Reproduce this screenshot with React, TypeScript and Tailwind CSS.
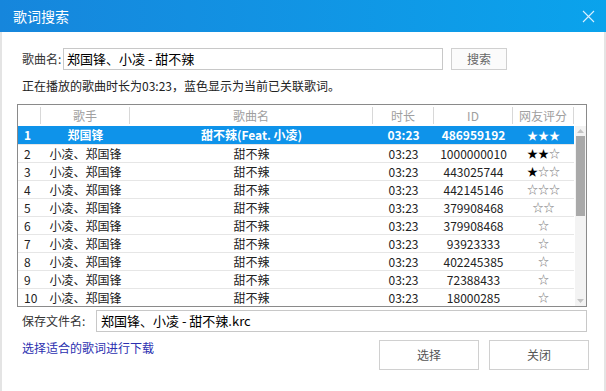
import React from 'react';

type Row = { no: number; artist: string; title: string; dur: string; id: string; full: number; empty: number };

const rows: Row[] = [
  { no: 1, artist: '郑国锋', title: '甜不辣(Feat. 小凌)', dur: '03:23', id: '486959192', full: 3, empty: 0 },
  { no: 2, artist: '小凌、郑国锋', title: '甜不辣', dur: '03:23', id: '1000000010', full: 2, empty: 1 },
  { no: 3, artist: '小凌、郑国锋', title: '甜不辣', dur: '03:23', id: '443025744', full: 1, empty: 2 },
  { no: 4, artist: '小凌、郑国锋', title: '甜不辣', dur: '03:23', id: '442145146', full: 0, empty: 3 },
  { no: 5, artist: '小凌、郑国锋', title: '甜不辣', dur: '03:23', id: '379908468', full: 0, empty: 2 },
  { no: 6, artist: '小凌、郑国锋', title: '甜不辣', dur: '03:23', id: '379908468', full: 0, empty: 1 },
  { no: 7, artist: '小凌、郑国锋', title: '甜不辣', dur: '03:23', id: '93923333', full: 0, empty: 1 },
  { no: 8, artist: '小凌、郑国锋', title: '甜不辣', dur: '03:23', id: '402245385', full: 0, empty: 1 },
  { no: 9, artist: '小凌、郑国锋', title: '甜不辣', dur: '03:23', id: '72388433', full: 0, empty: 1 },
  { no: 10, artist: '小凌、郑国锋', title: '甜不辣', dur: '03:23', id: '18000285', full: 0, empty: 1 },
];

const font = { fontFamily: '"Noto Sans CJK SC", "Noto Sans", sans-serif' };

export default function App() {
  return (
    <div
      className="w-[606px] h-[391px] bg-white flex flex-col text-[12px] text-[#222] overflow-hidden"
      style={font}
    >
      {/* Title bar */}
      <div className="h-[32px] shrink-0 flex items-center justify-between pl-[13px] pr-[10px] bg-gradient-to-r from-[#1686dc] to-[#0aa3ec]">
        <span className="text-white text-[14px]">歌词搜索</span>
        <svg width="13" height="13" viewBox="0 0 13 13" className="mr-[1px]">
          <path d="M1 1 L12 12 M12 1 L1 12" stroke="#d9f0ff" strokeWidth="1.1" />
        </svg>
      </div>

      <div className="flex-1 flex flex-col border-x-2 border-[#e4e4e4] px-[15px]">
        {/* Song name row */}
        <div className="flex items-center mt-[16px] h-[22px]">
          <span className="w-[46px] pl-[5px] text-[#333] whitespace-nowrap">歌曲名:</span>
          <div className="w-[380px] h-[22px] border border-[#c8c8c8] flex items-center px-[3px] text-[13px] text-black">
            郑国锋、小凌 - 甜不辣
          </div>
          <button className="ml-[8px] w-[56px] h-[22px] border border-[#d0d0d0] bg-[#fbfbfb] text-[#666]">搜索</button>
        </div>

        <div className="mt-[6px] pl-[5px] h-[20px] leading-[20px] text-[#222]">
          正在播放的歌曲时长为03:23，蓝色显示为当前已关联歌词。
        </div>

        {/* Table */}
        <div className="mt-[8px] w-[570px] h-[203px] shrink-0 border border-[#8a8a8a] flex flex-col">
          <div className="h-[21px] shrink-0 flex items-stretch text-[#a0a0a0]">
            <div className="w-[23px] border-r border-[#d8d8d8] my-[2px]" />
            <div className="w-[89px] border-r border-[#d8d8d8] flex items-center justify-center my-[2px]">歌手</div>
            <div className="w-[243px] border-r border-[#d8d8d8] flex items-center justify-center my-[2px]">歌曲名</div>
            <div className="w-[61px] border-r border-[#d8d8d8] flex items-center justify-center my-[2px]">时长</div>
            <div className="w-[79px] border-r border-[#d8d8d8] flex items-center justify-center my-[2px]">ID</div>
            <div className="w-[61px] border-r border-[#d8d8d8] flex items-center justify-center my-[2px]">网友评分</div>
          </div>
          <div className="flex-1 flex">
            <div className="w-[556px] flex flex-col">
              {rows.map((r) => {
                const sel = r.no === 1;
                return (
                  <div
                    key={r.no}
                    className={
                      sel
                        ? 'h-[18px] shrink-0 flex items-center bg-[#0e93ea] text-white font-semibold'
                        : 'h-[18px] shrink-0 flex items-center border-t border-[#e6e6e6] text-[#222]'
                    }
                  >
                    <div className="w-[23px] pl-[6px]">{r.no}</div>
                    <div className="w-[89px] text-center">{r.artist}</div>
                    <div className="w-[243px] text-center">{r.title}</div>
                    <div className="w-[61px] text-center">{r.dur}</div>
                    <div className="w-[79px] text-center">{r.id}</div>
                    <div className="w-[61px] text-center text-[11px] leading-none">
                      <span className={sel ? 'text-white' : 'text-black'}>{'★'.repeat(r.full)}</span>
                      <span className={sel ? 'text-white' : 'text-[#777]'}>{'☆'.repeat(r.empty)}</span>
                    </div>
                  </div>
                );
              })}
            </div>
            {/* Scrollbar */}
            <div className="w-[11px] ml-[1px] bg-[#f3f3f3] flex flex-col items-center">
              <div className="h-[10px] flex items-center justify-center">
                <svg width="7" height="4" viewBox="0 0 7 4"><path d="M0 4 L3.5 0 L7 4 Z" fill="#c4c4c4" /></svg>
              </div>
              <div className="w-[9px] h-[80px] bg-[#a9a9a9]" />
              <div className="flex-1" />
              <div className="h-[10px] flex items-center justify-center">
                <svg width="7" height="4" viewBox="0 0 7 4"><path d="M0 0 L3.5 4 L7 0 Z" fill="#c4c4c4" /></svg>
              </div>
            </div>
          </div>
        </div>

        {/* Save file row */}
        <div className="flex items-center mt-[3px] h-[22px]">
          <span className="w-[79px] pl-[5px] text-[#333] whitespace-nowrap">保存文件名:</span>
          <div className="w-[491px] h-[22px] border border-[#c8c8c8] flex items-center px-[4px] text-[13px] text-black">
            郑国锋、小凌 - 甜不辣.krc
          </div>
        </div>

        <div className="flex mt-[8px]">
          <div className="flex-1 pl-[5px] text-[#2b2fb0] leading-[16px]">选择适合的歌词进行下载</div>
          <button className="w-[100px] h-[30px] border border-[#d0d0d0] bg-white text-[#555]">选择</button>
          <button className="ml-[10px] w-[100px] h-[30px] border border-[#d0d0d0] bg-white text-[#555]">关闭</button>
        </div>
      </div>
    </div>
  );
}
